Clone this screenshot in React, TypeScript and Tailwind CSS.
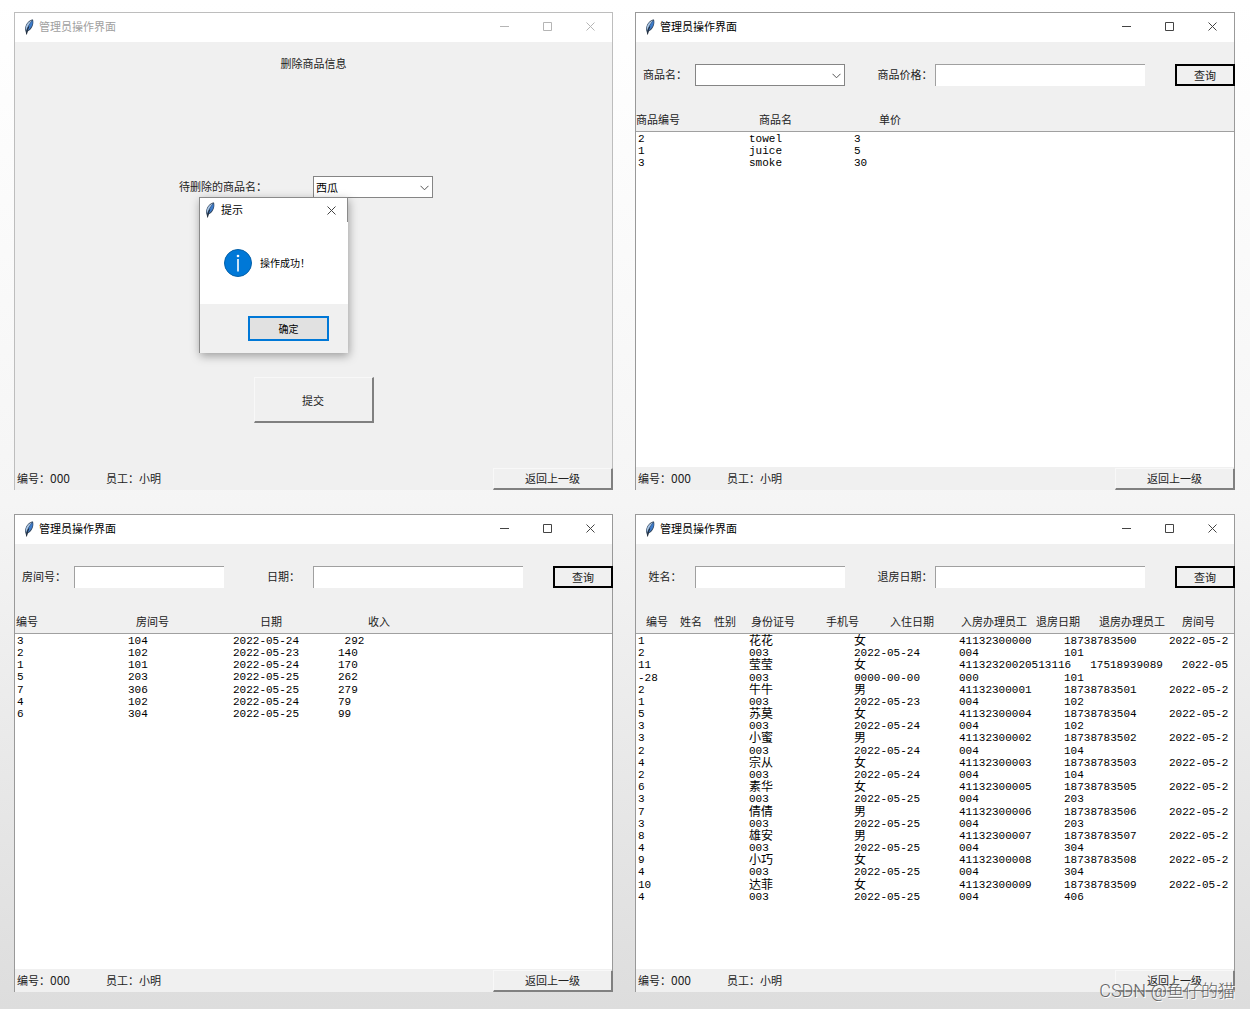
import React from 'react';

const Feather: React.FC = () => (
    <svg viewBox="0 0 10 16" className="h-4 w-[10px] shrink-0" aria-hidden="true">
        <path d="M9 0.4C6.6 0.3 3.4 2.6 1.9 6.2 0.9 8.6 0.9 10.4 1.5 12.2L2.5 15.8 3.6 12.6C6 11.4 7.8 9.2 8.8 6.4 9.5 4.3 9.5 2.2 9 0.4Z" fill="#33475f" />
        <path d="M7.8 1.4C5.6 2 3.4 4 2.4 6.4 1.7 8.4 1.6 9.8 2.1 11.4 3.4 7.6 5.4 4.4 8 1.4Z" fill="#a9c6e6" />
        <path d="M8.4 1.4C5.8 4.4 4.1 7.8 3.2 11.8 5.4 10.6 7.3 8.6 8.2 6.1 8.8 4.5 8.8 2.8 8.4 1.4Z" fill="#3d7ccc" />
        <path d="M4.8 7.6C3.8 9.8 2.9 12.4 2.5 15.4" fill="none" stroke="#141c26" strokeWidth="0.8" />
    </svg>
);

const Cross: React.FC = () => (
    <svg viewBox="0 0 9 9" className="size-[9px]" fill="none" stroke="currentColor" aria-hidden="true">
        <path d="M0.5 0.5 8.5 8.5M8.5 0.5 0.5 8.5" />
    </svg>
);

const raised = 'border-t border-l border-t-[#f8f8f8] border-l-[#f8f8f8] border-r-2 border-b-2 border-r-[#808080] border-b-[#808080] bg-[#f0f0f0]';

const AdminWindow: React.FC<{ inactive?: boolean; children: React.ReactNode }> = ({ inactive, children }) => (
    <section className={`relative flex min-w-0 flex-col border-x border-t bg-[#f0f0f0] ${inactive ? 'border-[#bdbdbd]' : 'border-[#999999]'}`}>
        <header className={`flex h-[29px] shrink-0 items-center bg-white pb-[2px] pl-[9px] ${inactive ? 'text-[#a0a0a0]' : 'text-black'}`}>
            <Feather />
            <h2 className="ml-[5px] flex-1 pb-px">管理员操作界面</h2>
            <div className={`flex h-full ${inactive ? 'text-[#b5b5b5]' : 'text-[#444444]'}`}>
                <button aria-label="最小化" className="flex w-[43px] items-center justify-center">
                    <svg viewBox="0 0 9 9" className="size-[9px]" fill="none" stroke="currentColor"><path d="M0 4.5H9" /></svg>
                </button>
                <button aria-label="最大化" className="flex w-[43px] items-center justify-center">
                    <svg viewBox="0 0 9 9" className="size-[9px]" fill="none" stroke="currentColor"><path d="M0.5 0.5H8.5V8.5H0.5Z" /></svg>
                </button>
                <button aria-label="关闭" className="flex w-[43px] items-center justify-center">
                    <Cross />
                </button>
            </div>
        </header>
        {children}
        <footer className="-mr-px flex h-[23px] shrink-0 items-center">
            <p className="w-[89px] pb-[2px] pl-[2px]">编号：<span className="text-[12px]">000</span></p>
            <p className="flex-1 pb-[2px] pl-[2px]">员工：小明</p>
            <button className={`h-[22px] w-[120px] ${raised}`}>返回上一级</button>
        </footer>
    </section>
);

const Combo: React.FC<{ id: string; value?: string }> = ({ id, value = '' }) => (
    <div className="relative">
        <select id={id} defaultValue={value} className="block h-[22px] w-full appearance-none border border-[#858585] bg-white pl-[2px] text-black">
            <option value={value}>{value}</option>
        </select>
        <svg viewBox="0 0 9 6" className="pointer-events-none absolute top-[9px] right-1 h-[6px] w-[9px]" fill="none" stroke="#555555" aria-hidden="true">
            <path d="M0.5 0.8 4.5 4.8 8.5 0.8" />
        </svg>
    </div>
);

const Field: React.FC<{ id: string }> = ({ id }) => (
    <input id={id} type="text" className="h-[22px] w-full min-w-0 border-t border-l border-[#a0a0a0] bg-white px-[2px]" />
);

type Header = [label: string, width: string];

type QueryProps = {
    id: string;
    first: string;
    second: string;
    combo?: boolean;
    headers: Header[];
    headPad: string;
    rows: string[][];
    bodyHeight: string;
};

const hasHan = (text: string) => /[\u4e00-\u9fff]/.test(text);

const QueryWindow: React.FC<QueryProps> = ({ id, first, second, combo, headers, headPad, rows, bodyHeight }) => (
    <AdminWindow>
        <form className="-mx-px mt-[22px] grid grid-cols-[2fr_5fr_1fr_2fr_7fr_1fr_2fr] items-center">
            <label htmlFor={`${id}-first`} className="pb-[2px] text-center whitespace-nowrap">{first}：</label>
            {combo ? <Combo id={`${id}-first`} /> : <Field id={`${id}-first`} />}
            <span />
            <label htmlFor={`${id}-second`} className="pb-[2px] text-center whitespace-nowrap">{second}：</label>
            <Field id={`${id}-second`} />
            <span />
            <button type="button" className="h-[22px] border-2 border-black">查询</button>
        </form>
        <table className="flex flex-1 flex-col">
            <thead className="mt-[22px] block h-[23px]">
                <tr className={`flex h-full items-center pb-[2px] whitespace-nowrap ${headPad}`}>
                    {headers.map(([label, width]) => (
                        <th key={label} className={`shrink-0 text-left font-normal ${width}`}>{label}</th>
                    ))}
                </tr>
            </thead>
            <tbody className="block flex-1 border-t border-[#a0a0a0] bg-white pt-px pl-[2px] font-['Liberation_Mono','Noto_Sans_CJK_SC',monospace] text-[11px] leading-[12px] text-black">
                <tr className="block">
                    <td className="block p-0">
                        <table className={`grid ${bodyHeight}`}>
                            <tbody className="grid auto-rows-fr">
                                {rows.map((row, i) => (
                                    <tr key={i} className="flex h-3 items-start whitespace-pre">
                                        {row.map((cell, j) => (
                                            <td
                                                key={j}
                                                className={`shrink-0 p-0 ${j === 0 ? 'w-[111px]' : cell === '17518939089' ? 'pr-[19px]' : j === row.length - 1 ? '' : 'min-w-[105px] pr-[19px]'} ${hasHan(cell) ? 'text-[12px] leading-[14px]' : ''}`}
                                            >
                                                {cell}
                                            </td>
                                        ))}
                                    </tr>
                                ))}
                            </tbody>
                        </table>
                    </td>
                </tr>
            </tbody>
        </table>
    </AdminWindow>
);

const goods = [
    ['2', 'towel', '3'],
    ['1', 'juice', '5'],
    ['3', 'smoke', '30'],
];

const income = [
    ['3', '104', '2022-05-24', ' 292'],
    ['2', '102', '2022-05-23', '140'],
    ['1', '101', '2022-05-24', '170'],
    ['5', '203', '2022-05-25', '262'],
    ['7', '306', '2022-05-25', '279'],
    ['4', '102', '2022-05-24', '79'],
    ['6', '304', '2022-05-25', '99'],
];

// each record wraps onto a second line
const guests = [
    ['1', '花花', '女', '41132300000', '18738783500', '2022-05-2'],
    ['2', '003', '2022-05-24', '004', '101'],
    ['11', '莹莹', '女', '41132320020513116', '17518939089', '2022-05'],
    ['-28', '003', '0000-00-00', '000', '101'],
    ['2', '牛牛', '男', '41132300001', '18738783501', '2022-05-2'],
    ['1', '003', '2022-05-23', '004', '102'],
    ['5', '苏莫', '女', '41132300004', '18738783504', '2022-05-2'],
    ['3', '003', '2022-05-24', '004', '102'],
    ['3', '小蜜', '男', '41132300002', '18738783502', '2022-05-2'],
    ['2', '003', '2022-05-24', '004', '104'],
    ['4', '宗从', '女', '41132300003', '18738783503', '2022-05-2'],
    ['2', '003', '2022-05-24', '004', '104'],
    ['6', '素华', '女', '41132300005', '18738783505', '2022-05-2'],
    ['3', '003', '2022-05-25', '004', '203'],
    ['7', '倩倩', '男', '41132300006', '18738783506', '2022-05-2'],
    ['3', '003', '2022-05-25', '004', '203'],
    ['8', '雄安', '男', '41132300007', '18738783507', '2022-05-2'],
    ['4', '003', '2022-05-25', '004', '304'],
    ['9', '小巧', '女', '41132300008', '18738783508', '2022-05-2'],
    ['4', '003', '2022-05-25', '004', '304'],
    ['10', '达菲', '女', '41132300009', '18738783509', '2022-05-2'],
    ['4', '003', '2022-05-25', '004', '406'],
];

const SuccessDialog: React.FC = () => (
    <div role="dialog" aria-label="提示" className="absolute top-[184px] left-[184px] flex h-[156px] w-[149px] flex-col border-t border-l border-[#8a8a8a] bg-white shadow-[1px_3px_9px_rgba(0,0,0,0.35)]">
        <div className="flex h-6 items-center pl-[5px] text-black">
            <Feather />
            <h3 className="ml-[6px] flex-1 pb-[2px]">提示</h3>
            <button aria-label="关闭" className="flex h-full w-[33px] items-center justify-center border-r border-[#8a8a8a] text-[#444444]">
                <Cross />
            </button>
        </div>
        <div className="flex flex-1 items-center pl-6">
            <svg viewBox="0 0 28 28" className="size-7" aria-hidden="true">
                <circle cx="14" cy="14" r="13.5" fill="#0078d7" stroke="#0560a8" />
                <circle cx="14" cy="7" r="1.3" fill="#ffffff" />
                <path d="M14 10V22.5" stroke="#ffffff" strokeWidth="1.6" />
            </svg>
            <p className="ml-2 text-[10px] text-black">操作成功！</p>
        </div>
        <div className="flex h-[49px] items-center justify-end bg-[#f0f0f0] pr-[19px]">
            <button className="h-[25px] w-[81px] border-2 border-[#0078d7] bg-[#e1e1e1] text-[10px] text-black">确定</button>
        </div>
    </div>
);

const DeleteWindow: React.FC = () => (
    <AdminWindow inactive>
        <form className="flex flex-1 flex-col pt-[10px]">
            <h1 className="text-center leading-[22px]">删除商品信息</h1>
            <div className="mt-[102px] flex items-center justify-center pr-[15px]">
                <label htmlFor="delete-name" className="w-[134px] pb-[2px] whitespace-nowrap">待删除的商品名：</label>
                <div className="w-[120px]">
                    <Combo id="delete-name" value="西瓜" />
                </div>
            </div>
            <button type="button" className={`mt-[179px] h-[46px] w-[120px] self-center ${raised}`}>提交</button>
        </form>
        <SuccessDialog />
    </AdminWindow>
);

const App: React.FC = () => (
    <main className="relative grid min-h-screen grid-cols-[599fr_600fr] grid-rows-2 gap-x-[22px] gap-y-6 bg-linear-to-b from-white via-[#f5f5f5] to-[#dddddd] pt-3 pr-[15px] pb-[17px] pl-[14px] font-['Noto_Sans_CJK_SC',sans-serif] text-[11px] leading-4 text-[#222222]">
        <DeleteWindow />
        <QueryWindow
            id="goods"
            first="商品名"
            second="商品价格"
            combo
            headPad="pl-0"
            headers={[['商品编号', 'w-[123px]'], ['商品名', 'w-[120px]'], ['单价', 'w-[60px]']]}
            rows={goods}
            bodyHeight="h-[36px]"
        />
        <QueryWindow
            id="income"
            first="房间号"
            second="日期"
            headPad="pl-px"
            headers={[['编号', 'w-[120px]'], ['房间号', 'w-[124px]'], ['日期', 'w-[108px]'], ['收入', 'w-[60px]']]}
            rows={income}
            bodyHeight="h-[85px]"
        />
        <QueryWindow
            id="guests"
            first="姓名"
            second="退房日期"
            headPad="pl-[10px]"
            headers={[
                ['编号', 'w-[34px]'],
                ['姓名', 'w-[34px]'],
                ['性别', 'w-[37px]'],
                ['身份证号', 'w-[75px]'],
                ['手机号', 'w-[64px]'],
                ['入住日期', 'w-[71px]'],
                ['入房办理员工', 'w-[75px]'],
                ['退房日期', 'w-[63px]'],
                ['退房办理员工', 'w-[83px]'],
                ['房间号', 'w-[40px]'],
            ]}
            rows={guests}
            bodyHeight="h-[268px]"
        />
        <p className="pointer-events-none absolute right-[15px] bottom-[6px] font-['Roboto','Noto_Sans_CJK_SC',sans-serif] text-[17px] leading-6 font-light text-[#666666] [text-shadow:1px_1px_0_#ffffff]">
            <span className="text-[18px]">CSDN @</span>鱼仔的猫
        </p>
    </main>
);

export default App;
